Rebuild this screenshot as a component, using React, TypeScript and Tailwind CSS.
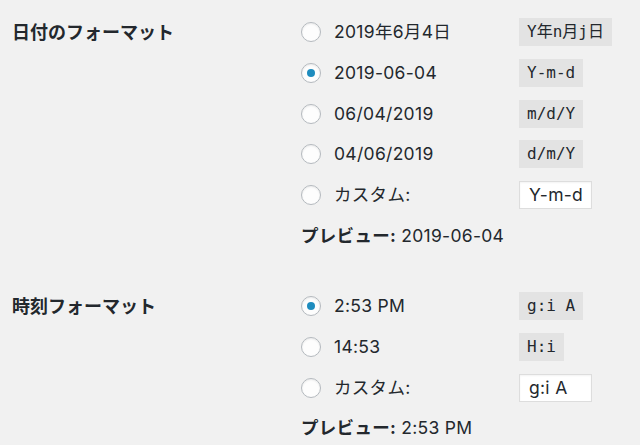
import React from "react";

const sans = { fontFamily: '"Inter", "Noto Sans CJK JP", sans-serif' };

function Radio({ checked }: { checked?: boolean }) {
  return (
    <span className="w-[20px] h-[20px] shrink-0 rounded-full border border-[#b4b9be] bg-[#fdfdfd] shadow-[inset_0_1px_2px_rgba(0,0,0,0.08)] flex items-center justify-center">
      {checked && <span className="w-[8px] h-[8px] rounded-full bg-[#1e8cbe]" />}
    </span>
  );
}

function Code({ children }: { children: React.ReactNode }) {
  return (
    <code className="bg-[#e3e3e3] px-[8px] h-[28px] flex items-center text-[16px] text-[#23282d] font-['DejaVu_Sans_Mono','Noto_Sans_CJK_JP',monospace]">
      {children}
    </code>
  );
}

function Row({
  checked,
  label,
  code,
  input,
}: {
  checked?: boolean;
  label: string;
  code?: string;
  input?: string;
}) {
  return (
    <div className="h-[40.7px] flex items-center">
      <Radio checked={checked} />
      <span className="ml-[13px] w-[185px] text-[17.5px] tracking-[0.3px]">{label}</span>
      {code && <Code>{code}</Code>}
      {input && (
        <span className="w-[73px] h-[28px] bg-white border border-[#dddddd] shadow-[inset_0_1px_2px_rgba(0,0,0,0.05)] flex items-center pl-[9px] text-[17.5px] tracking-[0.3px]">
          {input}
        </span>
      )}
    </div>
  );
}

function Preview({ value }: { value: string }) {
  return (
    <div className="h-[40.7px] flex items-center text-[17.5px] tracking-[0.3px]">
      <span className="font-bold">プレビュー:</span>
      <span className="ml-[5px]">{value}</span>
    </div>
  );
}

export default function App() {
  return (
    <div
      className="w-[640px] h-[445px] bg-[#f1f1f1] text-[#23282d] overflow-hidden pt-[12px]"
      style={sans}
    >
      <section className="flex">
        <div className="w-[301px] shrink-0 pl-[12px] h-[40.7px] flex items-center font-bold text-[18px]">
          日付のフォーマット
        </div>
        <div className="flex flex-col">
          <Row label="2019年6月4日" code="Y年n月j日" />
          <Row checked label="2019-06-04" code="Y-m-d" />
          <Row label="06/04/2019" code="m/d/Y" />
          <Row label="04/06/2019" code="d/m/Y" />
          <Row label="カスタム:" input="Y-m-d" />
          <Preview value="2019-06-04" />
        </div>
      </section>
      <section className="flex mt-[30px]">
        <div className="w-[301px] shrink-0 pl-[12px] h-[40.7px] flex items-center font-bold text-[18px]">
          時刻フォーマット
        </div>
        <div className="flex flex-col">
          <Row checked label="2:53 PM" code="g:i A" />
          <Row label="14:53" code="H:i" />
          <Row label="カスタム:" input="g:i A" />
          <Preview value="2:53 PM" />
        </div>
      </section>
    </div>
  );
}
